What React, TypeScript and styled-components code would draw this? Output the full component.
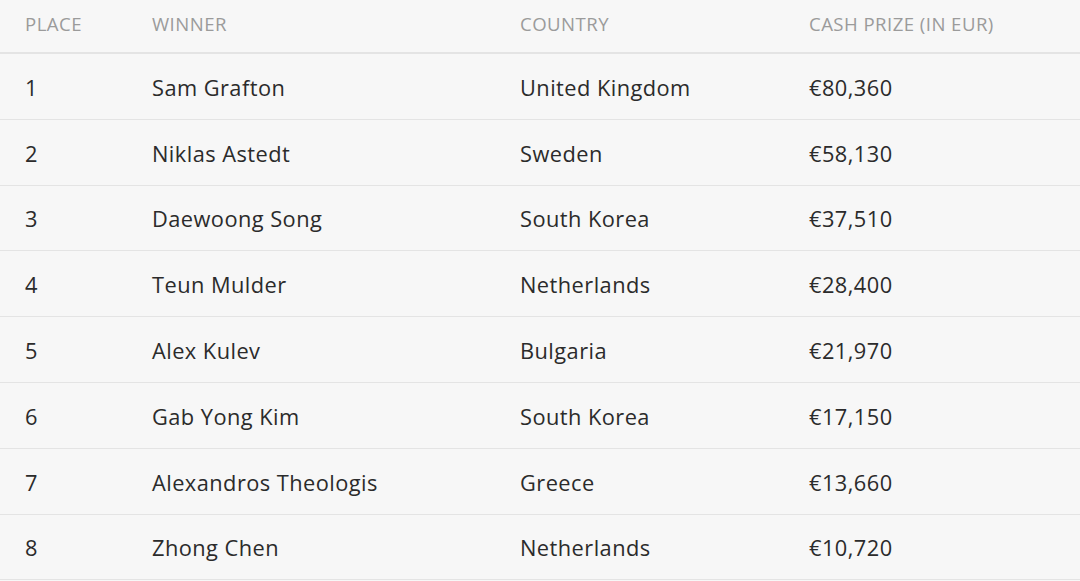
import * as React from 'react';
import styled, { createGlobalStyle } from 'styled-components';

interface IResult {
  place: number;
  winner: string;
  country: string;
  prize: string;
}

const results: IResult[] = [
  { place: 1, winner: 'Sam Grafton', country: 'United Kingdom', prize: '€80,360' },
  { place: 2, winner: 'Niklas Astedt', country: 'Sweden', prize: '€58,130' },
  { place: 3, winner: 'Daewoong Song', country: 'South Korea', prize: '€37,510' },
  { place: 4, winner: 'Teun Mulder', country: 'Netherlands', prize: '€28,400' },
  { place: 5, winner: 'Alex Kulev', country: 'Bulgaria', prize: '€21,970' },
  { place: 6, winner: 'Gab Yong Kim', country: 'South Korea', prize: '€17,150' },
  { place: 7, winner: 'Alexandros Theologis', country: 'Greece', prize: '€13,660' },
  { place: 8, winner: 'Zhong Chen', country: 'Netherlands', prize: '€10,720' },
];

const GlobalStyle = createGlobalStyle`
  html, body {
    margin: 0;
    background: #f7f7f7;
  }
  body {
    font-family: "Open Sans", "Noto Sans", sans-serif;
  }
`;

const Table = styled.div`
  width: 1080px;
  background: #f7f7f7;
`;

const Row = styled.div<{ $header?: boolean }>`
  display: grid;
  grid-template-columns: 127px 368px 289px 1fr;
  align-items: center;
  box-sizing: border-box;
  height: ${p => (p.$header ? '54px' : '65.8px')};
  padding: ${p => (p.$header ? '0 0 6px 25px' : '2px 0 0 25px')};
  border-bottom: ${p => (p.$header ? '2px' : '1.5px')} solid #e4e4e4;
  font-size: ${p => (p.$header ? '18.6px' : '21.8px')};
  letter-spacing: 0.45px;
  color: ${p => (p.$header ? '#9b9b9b' : '#2b2b2b')};
  text-transform: ${p => (p.$header ? 'uppercase' : 'none')};
`;

const Cell = styled.div`
  white-space: nowrap;
`;

const App: React.FunctionComponent = () => {
  return (
    <>
      <GlobalStyle />
      <Table>
        <Row $header>
          <Cell>Place</Cell>
          <Cell>Winner</Cell>
          <Cell>Country</Cell>
          <Cell>Cash Prize (in EUR)</Cell>
        </Row>
        {results.map(r => (
          <Row key={r.place}>
            <Cell>{r.place}</Cell>
            <Cell>{r.winner}</Cell>
            <Cell>{r.country}</Cell>
            <Cell>{r.prize}</Cell>
          </Row>
        ))}
      </Table>
    </>
  );
};

export default App;
